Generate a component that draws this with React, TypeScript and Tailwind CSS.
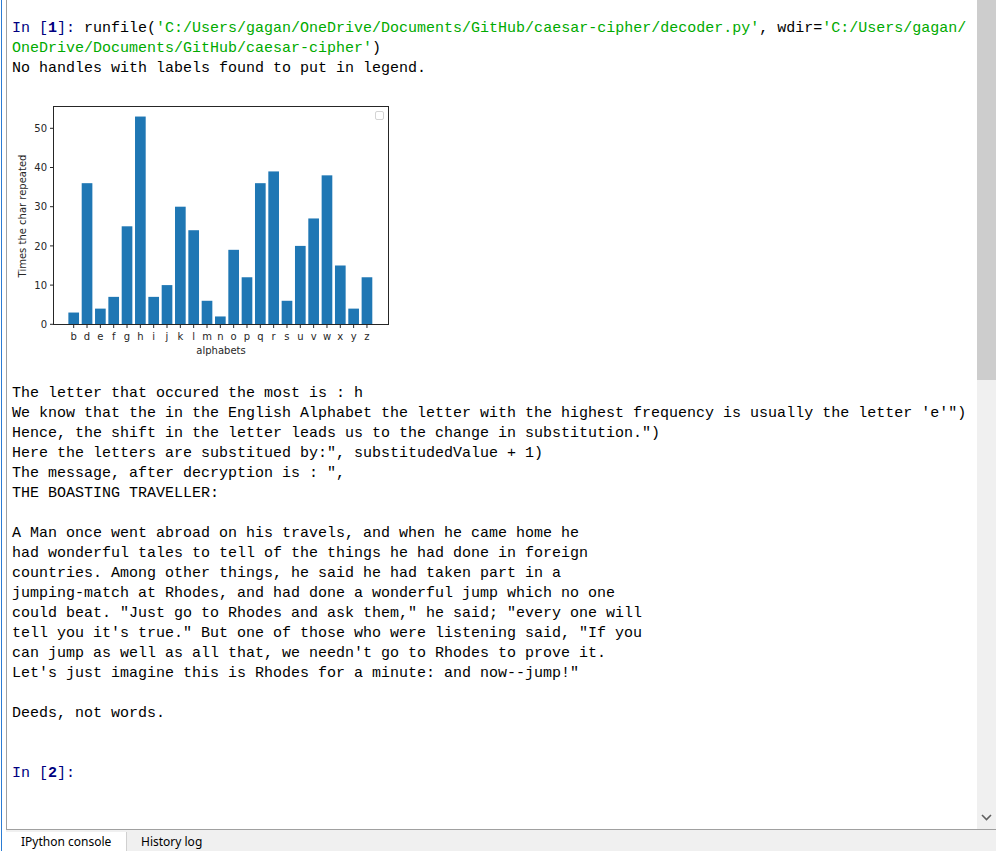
import React from "react";

const letters = ["b", "d", "e", "f", "g", "h", "i", "j", "k", "l", "m", "n", "o", "p", "q", "r", "s", "u", "v", "w", "x", "y", "z"];
const counts = [3, 36, 4, 7, 25, 53, 7, 10, 30, 24, 6, 2, 19, 12, 36, 39, 6, 20, 27, 38, 15, 4, 12];

const mono = { fontFamily: '"Liberation Mono", "DejaVu Sans Mono", monospace' };

// chart drawn in page coordinates, shifted back by the svg origin
function FrequencyChart() {
  const base = 324.3;
  const unit = 3.92;
  const step = 13.33;
  const x0 = 73.7;
  const ticks = [0, 10, 20, 30, 40, 50];
  return (
    <svg width="400" height="305" className="block" style={{ fontFamily: '"DejaVu Sans", sans-serif' }}>
      <g transform="translate(-12,-79)">
        {counts.map((c, i) => (
          <rect key={i} x={x0 + i * step - 5.33} y={base - c * unit} width={10.67} height={c * unit} fill="#1f77b4" />
        ))}
        <rect x="53.5" y="106.5" width="335" height="218" fill="none" stroke="#262626" strokeWidth="1" />
        {ticks.map((t) => (
          <g key={t}>
            <line x1="50" x2="53.5" y1={base - t * unit} y2={base - t * unit} stroke="#262626" strokeWidth="1" />
            <text x="47" y={base - t * unit + 3.6} fontSize="10" textAnchor="end" fill="#262626">
              {t}
            </text>
          </g>
        ))}
        {letters.map((l, i) => (
          <g key={l}>
            <line x1={x0 + i * step} x2={x0 + i * step} y1="324.5" y2="328" stroke="#262626" strokeWidth="1" />
            <text x={x0 + i * step} y="339.5" fontSize="10" textAnchor="middle" fill="#262626">
              {l}
            </text>
          </g>
        ))}
        <text x="221" y="353.5" fontSize="10" textAnchor="middle" fill="#262626">
          alphabets
        </text>
        <text x="0" y="0" fontSize="10" textAnchor="middle" fill="#262626" transform="translate(25.5,216) rotate(-90)">
          Times the char repeated
        </text>
        <rect x="375.5" y="111.5" width="8" height="8" rx="1.5" fill="#fff" stroke="#d4d4d4" strokeWidth="1" />
      </g>
    </svg>
  );
}

const story = [
  "A Man once went abroad on his travels, and when he came home he",
  "had wonderful tales to tell of the things he had done in foreign",
  "countries. Among other things, he said he had taken part in a",
  "jumping-match at Rhodes, and had done a wonderful jump which no one",
  'could beat. "Just go to Rhodes and ask them," he said; "every one will',
  "tell you it's true.\" But one of those who were listening said, \"If you",
  "can jump as well as all that, we needn't go to Rhodes to prove it.",
  'Let\'s just imagine this is Rhodes for a minute: and now--jump!"',
];

export default function App() {
  return (
    <div className="w-[996px] h-[851px] flex bg-white overflow-hidden">
      {/* window edge */}
      <div className="w-px bg-white" />
      <div className="w-px bg-[#2b7cd3]" />
      <div className="w-[4px] bg-white" />

      <div className="flex-1 flex flex-col">
        <div className="h-[830px] flex border-l border-b border-[#a0a0a0]">
          <div className="flex-1 pl-[5px] pt-[19px] text-[15px] leading-[20px] text-black whitespace-pre" style={mono}>
            <div>
              <span className="text-[#000080]">In [</span>
              <span className="text-[#000080] font-bold">1</span>
              <span className="text-[#000080]">]: </span>
              runfile(<span className="text-[#00aa00]">'C:/Users/gagan/OneDrive/Documents/GitHub/caesar-cipher/decoder.py'</span>, wdir=
              <span className="text-[#00aa00]">'C:/Users/gagan/</span>
            </div>
            <div>
              <span className="text-[#00aa00]">OneDrive/Documents/GitHub/caesar-cipher'</span>)
            </div>
            <div>No handles with labels found to put in legend.</div>
            <FrequencyChart />
            <div>The letter that occured the most is : h</div>
            <div>We know that the in the English Alphabet the letter with the highest frequency is usually the letter 'e'")</div>
            <div>Hence, the shift in the letter leads us to the change in substitution.")</div>
            <div>Here the letters are substitued by:", substitudedValue + 1)</div>
            <div>The message, after decryption is : ",</div>
            <div>THE BOASTING TRAVELLER:</div>
            <div> </div>
            {story.map((line) => (
              <div key={line}>{line}</div>
            ))}
            <div> </div>
            <div>Deeds, not words.</div>
            <div> </div>
            <div> </div>
            <div>
              <span className="text-[#000080]">In [</span>
              <span className="text-[#000080] font-bold">2</span>
              <span className="text-[#000080]">]:</span>
            </div>
          </div>

          {/* scrollbar */}
          <div className="w-[19px] flex flex-col bg-[#f0f0f0]">
            <div className="h-[380px] bg-[#cdcdcd]" />
            <div className="flex-1" />
            <div className="h-[17px] flex items-center justify-center mb-[3px]">
              <svg width="11" height="7" viewBox="0 0 11 7">
                <path d="M1 1 L5.5 5.5 L10 1" fill="none" stroke="#606060" strokeWidth="1.6" />
              </svg>
            </div>
          </div>
        </div>

        {/* tabs */}
        <div className="flex-1 flex bg-[#f0f0f0] text-[12px] text-black pt-[2px]" style={{ fontFamily: '"Noto Sans", "Open Sans", sans-serif' }}>
          <div className="w-[121px] bg-white border-r border-[#d0d0d0] flex items-center pl-[15px] leading-none">IPython console</div>
          <div className="flex items-center pl-[14px] leading-none">History log</div>
        </div>
      </div>
    </div>
  );
}
